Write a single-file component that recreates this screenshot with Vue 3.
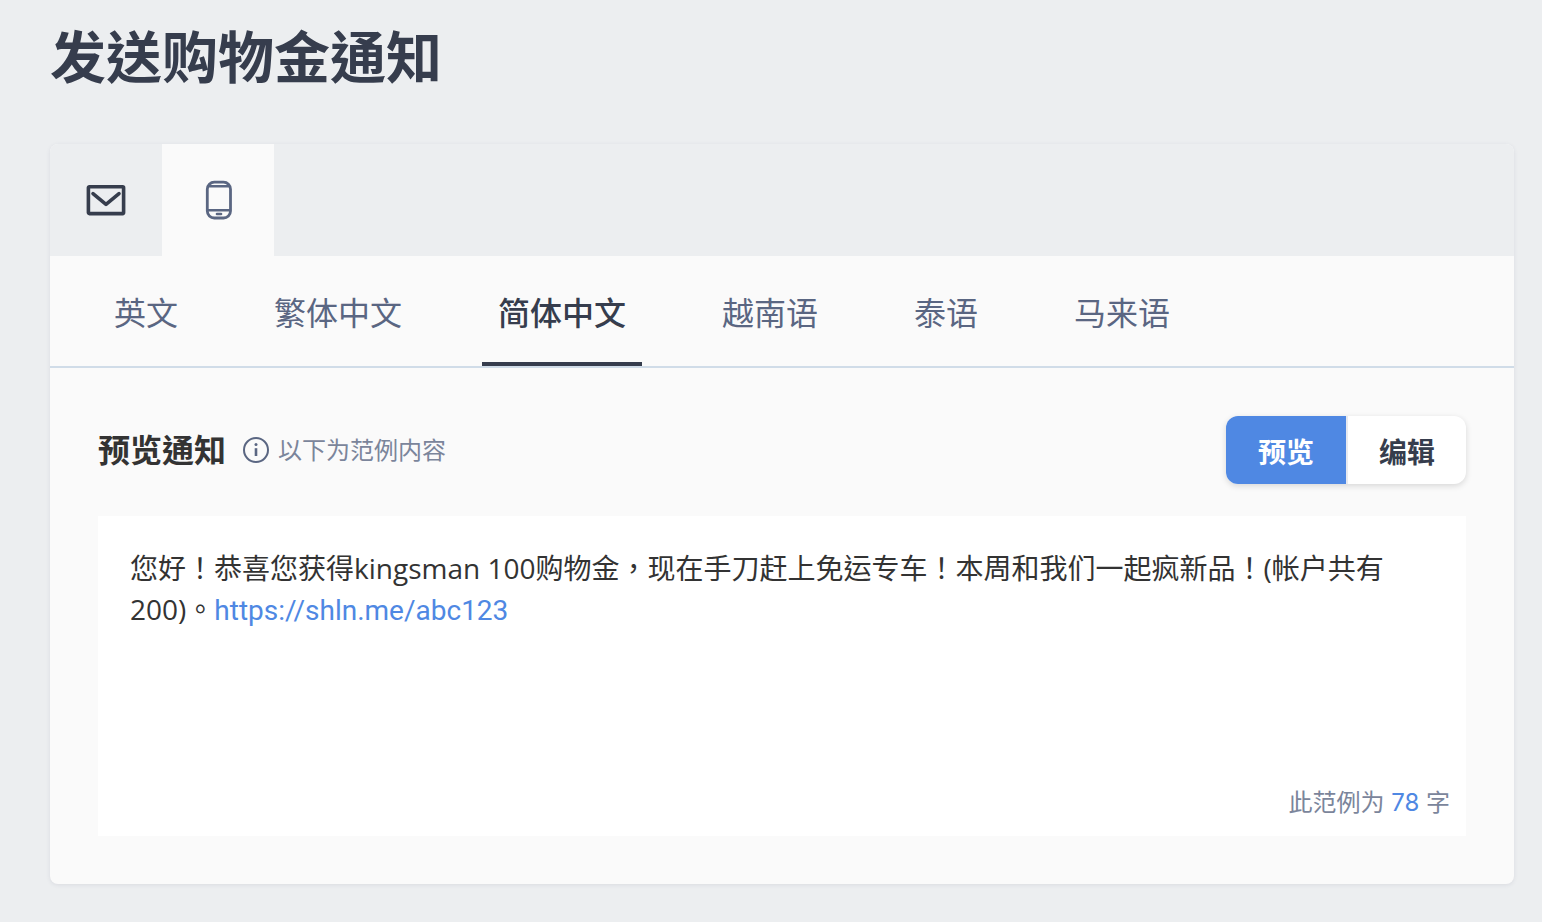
<template>
  <main class="page">
    <h1 class="page-title">发送购物金通知</h1>

    <section class="card">
      <div class="channel-tabs">
        <button
          type="button"
          class="channel-tab"
          :class="{ active: channel === 'mail' }"
          aria-label="Email"
          @click="channel = 'mail'"
        >
          <svg class="mail-icon" width="40" height="32" viewBox="0 0 40 32" fill="none">
            <rect x="2.4" y="2.8" width="35.2" height="26.8" rx="1" stroke="currentColor" stroke-width="3.6" />
            <path d="M7 9.6l13 10.8 13-10.8" stroke="currentColor" stroke-width="3.6" stroke-linecap="round" stroke-linejoin="round" />
          </svg>
        </button>
        <button
          type="button"
          class="channel-tab"
          :class="{ active: channel === 'sms' }"
          aria-label="SMS"
          @click="channel = 'sms'"
        >
          <svg class="phone-icon" width="28" height="40" viewBox="0 0 28 40" fill="none" stroke="currentColor">
            <rect x="3.3" y="2.2" width="23.2" height="35.8" rx="7" stroke-width="2.8" />
            <path d="M4 6.2h22M4 30.2h22" stroke-width="2.4" />
            <path d="M13 34h4" stroke-width="2.6" stroke-linecap="round" />
          </svg>
        </button>
      </div>

      <nav class="lang-tabs">
        <button
          v-for="item in languages"
          :key="item"
          type="button"
          class="lang-tab"
          :class="{ active: item === language }"
          @click="language = item"
        >{{ item }}</button>
      </nav>

      <div class="card-body">
        <div class="preview-header">
          <h2 class="preview-title">预览通知</h2>
          <svg class="info-icon" width="28" height="28" viewBox="0 0 28 28" fill="none">
            <circle cx="14" cy="14" r="12" stroke="currentColor" stroke-width="2" />
            <circle cx="14" cy="8.6" r="1.5" fill="currentColor" />
            <path d="M14 12.2v7.8" stroke="currentColor" stroke-width="2.6" />
          </svg>
          <span class="hint">以下为范例内容</span>
          <div class="mode-switch">
            <button
              type="button"
              class="mode-button"
              :class="{ active: mode === 'preview' }"
              @click="mode = 'preview'"
            >预览</button>
            <button
              type="button"
              class="mode-button"
              :class="{ active: mode === 'edit' }"
              @click="mode = 'edit'"
            >编辑</button>
          </div>
        </div>

        <div class="message-box">
          <p class="message">您好！恭喜您获得kingsman 100购物金，现在手刀赶上免运专车！本周和我们一起疯新品！(帐户共有200)。<a href="https://shln.me/abc123">https://shln.me/abc123</a></p>
          <p class="counter">此范例为 <span class="count">78</span> 字</p>
        </div>
      </div>
    </section>
  </main>
</template>

<script setup>
import { ref } from 'vue'

const languages = ['英文', '繁体中文', '简体中文', '越南语', '泰语', '马来语']

const channel = ref('sms')
const language = ref('简体中文')
const mode = ref('preview')
</script>

<style>
body {
  background: #eceef0;
}
</style>

<style scoped>
.page {
  padding: 16px 28px 38px 50px;
  font-family: "Open Sans", "Noto Sans CJK TC", sans-serif;
  color: #333;
}
h1, h2, p {
  margin: 0;
}
button {
  margin: 0;
  border: 0;
  background: transparent;
  font-family: inherit;
  cursor: pointer;
}
.page-title {
  margin-bottom: 48px;
  font-size: 56px;
  line-height: 80px;
  font-weight: 600;
  color: #363d4d;
}
.card {
  background: #fafafa;
  border-radius: 8px;
  box-shadow: 0 1px 4px rgba(54, 61, 100, 0.1);
}
.channel-tabs {
  display: flex;
  background: #eceef0;
  border-radius: 8px 8px 0 0;
}
.channel-tab {
  display: flex;
  align-items: center;
  justify-content: center;
  width: 112px;
  height: 112px;
  padding: 0;
  color: #363d4d;
}
.channel-tab.active {
  background: #fafafa;
  color: #5a6682;
}
.lang-tabs {
  display: flex;
  gap: 64px;
  padding: 0 48px;
  border-bottom: 2px solid #d0dce8;
}
.lang-tab {
  height: 110px;
  padding: 8px 16px 0;
  border-bottom: 4px solid transparent;
  font-size: 32px;
  line-height: 48px;
  color: #5a6682;
}
.lang-tab.active {
  border-bottom-color: #363d4d;
  font-weight: 500;
  color: #363d4d;
}
.card-body {
  padding: 48px;
}
.preview-header {
  display: flex;
  align-items: center;
  margin-bottom: 32px;
}
.preview-title {
  margin-right: 16px;
  font-size: 32px;
  line-height: 48px;
  font-weight: 600;
}
.info-icon {
  margin-right: 8px;
  color: #5a6682;
}
.hint {
  font-size: 24px;
  line-height: 36px;
  color: #7b859b;
}
.mode-switch {
  display: flex;
  margin-left: auto;
  border-radius: 12px;
  overflow: hidden;
  background: #fff;
  box-shadow: 0 2px 6px rgba(0, 0, 0, 0.14);
}
.mode-button {
  width: 120px;
  height: 68px;
  padding: 4px 0 0;
  font-size: 28px;
  line-height: 40px;
  font-weight: 700;
  color: #363d4d;
}
.mode-button + .mode-button {
  border-left: 2px solid #e8eaef;
}
.mode-button.active {
  background: #4f88e3;
  color: #fff;
}
.message-box {
  display: flex;
  flex-direction: column;
  justify-content: space-between;
  min-height: 320px;
  padding: 32px 16px 16px 32px;
  box-sizing: border-box;
  background: #fff;
}
.message {
  padding-right: 16px;
  font-size: 28px;
  line-height: 41px;
}
.message a {
  font-family: Roboto, sans-serif;
  color: #4f88e3;
  text-decoration: none;
}
.counter {
  font-family: Inter, "Noto Sans CJK TC", sans-serif;
  font-size: 24px;
  line-height: 34px;
  text-align: right;
  color: #7b859b;
}
.count {
  color: #4f88e3;
}
</style>
